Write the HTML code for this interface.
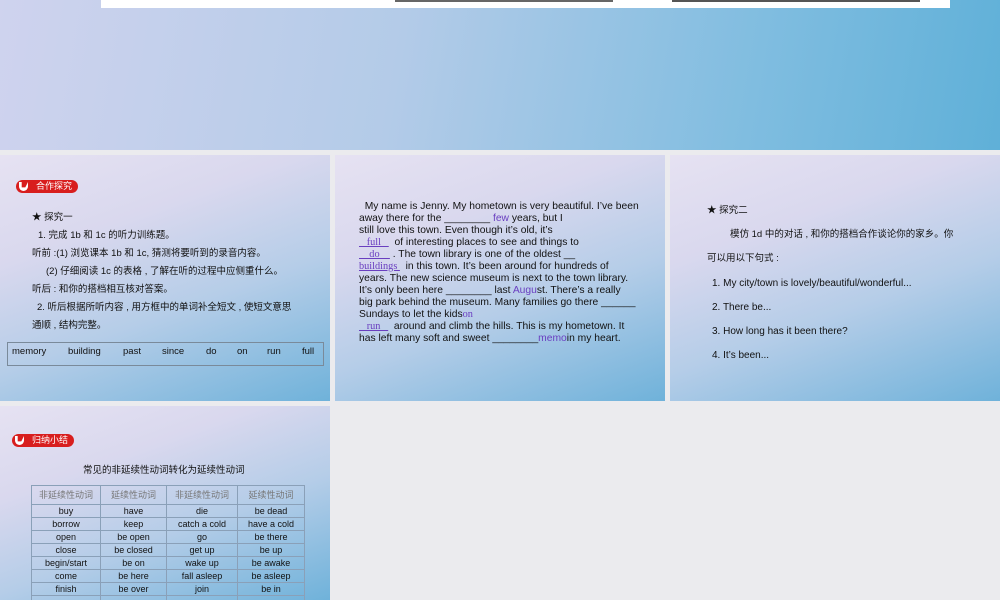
<!DOCTYPE html>
<html><head><meta charset="utf-8"><style>
body{margin:0;width:1000px;height:600px;background:#ebebee;position:relative;overflow:hidden;font-family:"Liberation Sans","Noto Sans CJK SC",sans-serif;color:#111}
.s{position:absolute;overflow:hidden;background:linear-gradient(160deg,#e6e2f2 0%,#d9d8ee 30%,#b5cde8 60%,#6fb2da 100%)}
.t{position:absolute;font-size:9.5px;white-space:nowrap;line-height:1}
.badge{position:absolute;height:13px;background:#d81e1e;border-radius:7px;color:#fff;font-size:9px;line-height:13px;padding:0 6px 0 20px}
.badge::before{content:"";position:absolute;left:3px;top:2px;width:9px;height:9px;border-radius:0 0 6px 6px;background:#fff;clip-path:polygon(0 0,30% 0,30% 60%,70% 60%,100% 0,100% 100%,0 100%)}
.b{color:#6a3fc0;font-family:"Liberation Serif",serif;text-decoration:underline}
table{border-collapse:collapse;position:absolute;font-size:9px}
td{border:1px solid #8aa0b8;text-align:center;height:12px;padding:0;line-height:12px}
</style></head><body>
<div class="s" style="left:0;top:0;width:1000px;height:150px;background:linear-gradient(100deg,#cfd3ee 0%,#b3cbe8 40%,#80bde0 75%,#5fb0d8 100%)">
<div style="position:absolute;left:101px;top:0;width:849px;height:8px;background:#fff"></div>
<div style="position:absolute;left:395px;top:0;width:218px;height:2px;background:#666"></div>
<div style="position:absolute;left:672px;top:0;width:248px;height:2px;background:#555"></div>
</div>

<div class="s" style="left:0;top:155px;width:330px;height:246px">
<div class="badge" style="left:16px;top:25px">合作探究</div>
<div class="t" style="left:32px;top:58px">★ 探究一</div>
<div class="t" style="left:38px;top:76px">1. 完成 1b 和 1c 的听力训练题。</div>
<div class="t" style="left:32px;top:94px">听前 :(1) 浏览课本 1b 和 1c, 猜测将要听到的录音内容。</div>
<div class="t" style="left:46px;top:112px">(2) 仔细阅读 1c 的表格 , 了解在听的过程中应侧重什么。</div>
<div class="t" style="left:32px;top:130px">听后 : 和你的搭档相互核对答案。</div>
<div class="t" style="left:37px;top:148px">2. 听后根据所听内容 , 用方框中的单词补全短文 , 使短文意思</div>
<div class="t" style="left:32px;top:166px">通顺 , 结构完整。</div>
<div style="position:absolute;left:7px;top:187px;width:315px;height:22px;border:1px solid #7a8a9a"></div>
<div class="t" style="left:12px;top:192px;font-size:9.5px">memory</div>
<div class="t" style="left:68px;top:192px;font-size:9.5px">building</div>
<div class="t" style="left:123px;top:192px;font-size:9.5px">past</div>
<div class="t" style="left:162px;top:192px;font-size:9.5px">since</div>
<div class="t" style="left:206px;top:192px;font-size:9.5px">do</div>
<div class="t" style="left:237px;top:192px;font-size:9.5px">on</div>
<div class="t" style="left:267px;top:192px;font-size:9.5px">run</div>
<div class="t" style="left:302px;top:192px;font-size:9.5px">full</div>
</div>

<div class="s" style="left:335px;top:155px;width:330px;height:246px">
<div style="position:absolute;left:24px;top:46px;font-size:10.3px;line-height:12px;white-space:nowrap">
&nbsp;&nbsp;My name is Jenny. My hometown is very beautiful. I’ve been<br>
away there for the ________ <span style="color:#6a3fc0">few</span> years, but I<br>
still love this town. Even though it’s old, it’s<br>
<span class="b">&nbsp;&nbsp;&nbsp;full&nbsp;&nbsp;&nbsp;</span>&nbsp; of interesting places to see and things to<br>
<span class="b">&nbsp;&nbsp;&nbsp;&nbsp;do&nbsp;&nbsp;&nbsp;&nbsp;</span> . The town library is one of the oldest __<br>
<span class="b">buildings </span>&nbsp; in this town. It’s been around for hundreds of<br>
years. The new science museum is next to the town library.<br>
It’s only been here ________ last <span style="color:#6a3fc0">Augu</span>st. There’s a really<br>
big park behind the museum. Many families go there ______<br>
Sundays to let the kids<span style="color:#6a3fc0;font-family:'Liberation Serif'">on</span><br>
<span class="b">&nbsp;&nbsp;&nbsp;run&nbsp;&nbsp;&nbsp;</span>&nbsp; around and climb the hills. This is my hometown. It<br>
has left many soft and sweet ________<span style="color:#6a3fc0">memo</span>in my heart.
</div>
</div>

<div class="s" style="left:670px;top:155px;width:330px;height:246px">
<div class="t" style="left:37px;top:51px">★ 探究二</div>
<div class="t" style="left:60px;top:75px">模仿 1d 中的对话 , 和你的搭档合作谈论你的家乡。你</div>
<div class="t" style="left:37px;top:99px">可以用以下句式 :</div>
<div class="t" style="left:42px;top:124px;font-size:10px">1. My city/town is lovely/beautiful/wonderful...</div>
<div class="t" style="left:42px;top:148px;font-size:10px">2. There be...</div>
<div class="t" style="left:42px;top:172px;font-size:10px">3. How long has it been there?</div>
<div class="t" style="left:42px;top:196px;font-size:10px">4. It’s been...</div>
</div>

<div class="s" style="left:0;top:406px;width:330px;height:194px">
<div class="badge" style="left:12px;top:28px">归纳小结</div>
<div class="t" style="left:83px;top:60px;font-size:9.5px">常见的非延续性动词转化为延续性动词</div>
<table style="left:31px;top:79px;width:274px">
<tr style="color:#777"><td style="height:18px;width:68px">非延续性动词</td><td style="width:65px">延续性动词</td><td style="width:70px">非延续性动词</td><td>延续性动词</td></tr>
<tr><td>buy</td><td>have</td><td>die</td><td>be dead</td></tr>
<tr><td>borrow</td><td>keep</td><td>catch a cold</td><td>have a cold</td></tr>
<tr><td>open</td><td>be open</td><td>go</td><td>be there</td></tr>
<tr><td>close</td><td>be closed</td><td>get up</td><td>be up</td></tr>
<tr><td>begin/start</td><td>be on</td><td>wake up</td><td>be awake</td></tr>
<tr><td>come</td><td>be here</td><td>fall asleep</td><td>be asleep</td></tr>
<tr><td>finish</td><td>be over</td><td>join</td><td>be in</td></tr>
<tr><td>&nbsp;</td><td></td><td></td><td></td></tr>
</table>
</div>
</body></html>
